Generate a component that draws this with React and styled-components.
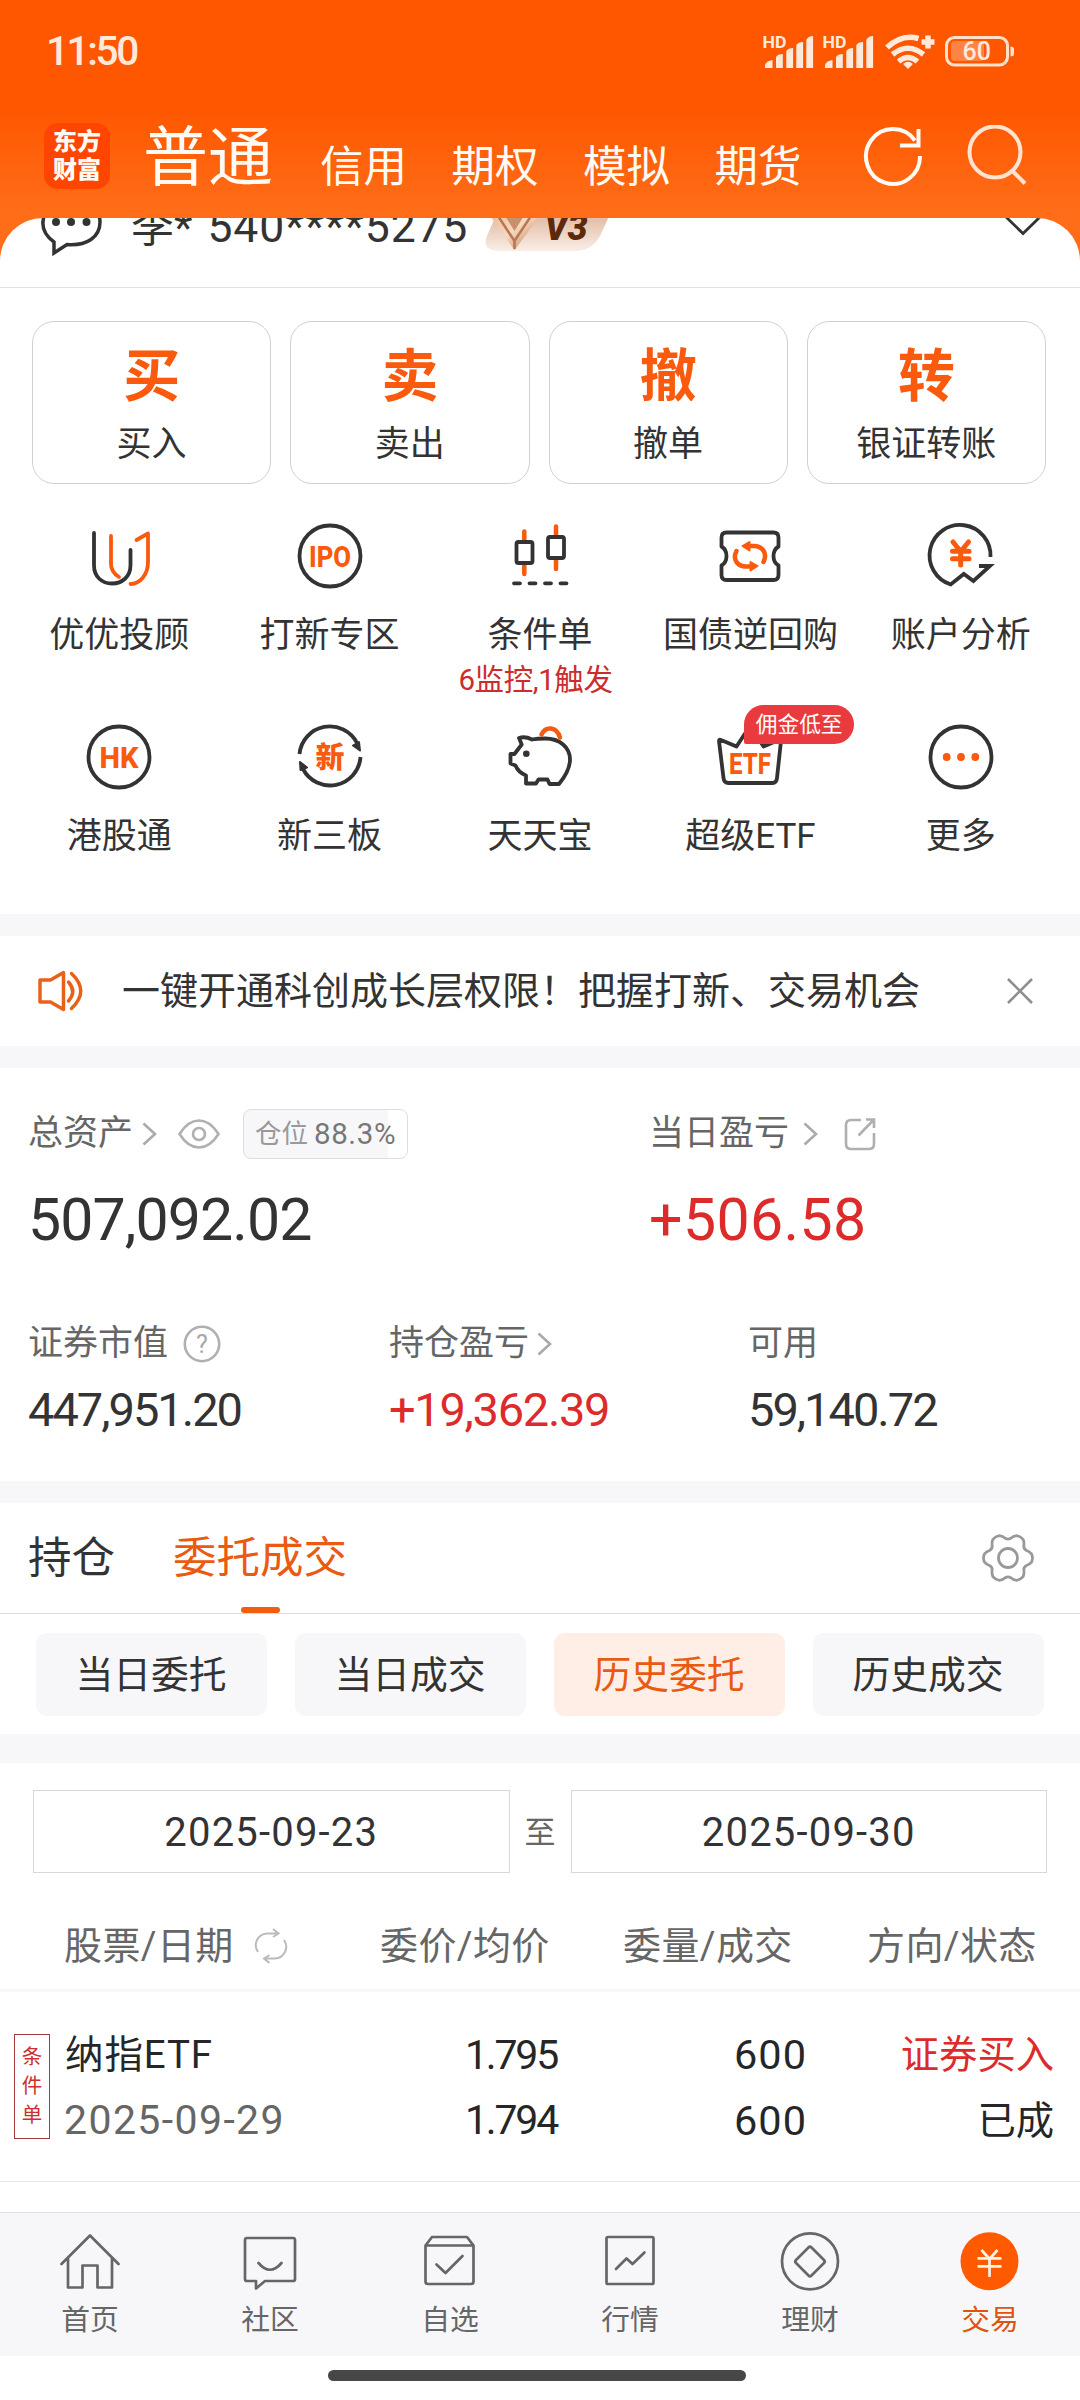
import React from "react";
import styled, { createGlobalStyle } from "styled-components";

const orange = "#f95a0d";
const dark = "#333";

const GlobalStyle = createGlobalStyle`
* {
	box-sizing: border-box;
}
body {
	margin: 0;
	background: #fff;
	font-family: Roboto, "Noto Sans CJK SC", sans-serif;
	color: #333;
}
svg {
	display: block;
	flex: none;
}
`;

const Page = styled.div`
width: 1080px;
height: 2400px;
overflow: hidden;
display: flex;
flex-direction: column;
background: linear-gradient(#ff5600 0, #ff5600 105px, #ff6d18 212px);
`;

const Text = styled.span`
font-size: ${p => p.$size}px;
line-height: ${p => p.$lh || Math.round(p.$size * 1.2)}px;
color: ${p => p.$color || "inherit"};
font-weight: ${p => p.$weight || 400};
letter-spacing: ${p => p.$ls || 0}px;
margin-left: ${p => p.$ml || 0}px;
margin-right: ${p => p.$mr || 0}px;
white-space: nowrap;
`;

/* ---------- header ---------- */

const StatusBar = styled.div`
height: 102px;
display: flex;
justify-content: space-between;
padding: 0 65px 0 46px;
align-items: center;
color: #ffe9da;
`;

const StatusIcons = styled.div`
display: flex;
align-items: center;
`;

const TopNav = styled.div`
height: 116px;
display: flex;
align-items: flex-start;
padding: 0 51px 0 44px;
color: #fffaf3;
`;

const Logo = styled.div`
width: 66px;
height: 66px;
margin-top: 21px;
padding-top: 5px;
border-radius: 14px;
background: #ff4500;
text-align: center;
font-size: 24px;
line-height: 28px;
font-weight: 900;
`;

const TopTabs = styled.div`
display: flex;
align-items: flex-start;
margin: 16px 0 0 33px;
flex: 1;
`;

const TopTab = styled.span`
font-size: ${p => (p.$active ? 65 : 43.5)}px;
line-height: 80px;
padding-top: ${p => (p.$active ? 0 : 10)}px;
margin-right: ${p => (p.$active ? 47 : 44.5)}px;
`;

const TopIcons = styled.div`
display: flex;
gap: 44px;
margin-top: 23px;
`;

/* ---------- account ---------- */

const Sheet = styled.div`
flex: none;
height: 696px;
background: #fff;
border-radius: 43px 43px 0 0;
overflow: hidden;
`;

const AccountRow = styled.div`
height: 70px;
border-bottom: 1px solid #e2e2e2;
overflow: hidden;
`;

const AccountInner = styled.div`
display: flex;
align-items: center;
height: 60px;
margin-top: -21px;
padding: 0 38px;
`;

const Spacer = styled.div`
flex: ${p => (p.$w ? "none" : 1)};
width: ${p => p.$w || 0}px;
`;

const Actions = styled.div`
display: grid;
grid-template-columns: repeat(4, 1fr);
gap: 19px;
padding: 33px 34px 0 32px;
`;

const Action = styled.div`
height: 163px;
border: 1.5px solid #d0d0d0;
border-radius: 22px;
display: flex;
flex-direction: column;
align-items: center;
padding-top: 20px;
`;

const IconGrid = styled.div`
display: grid;
grid-template-columns: repeat(5, 1fr);
grid-auto-rows: 201px;
padding: 36px 14px 0;
`;

const IconCell = styled.div`
position: relative;
display: flex;
flex-direction: column;
align-items: center;
`;

const CellLabel = styled.span`
margin-top: 23px;
font-size: 35px;
line-height: 41px;
white-space: nowrap;
`;

const CellNote = styled.span`
margin: 6px 9px 0 0;
font-size: 29.5px;
line-height: 36px;
letter-spacing: -0.4px;
color: #cc2c2c;
white-space: nowrap;
`;

const Badge = styled.span`
position: absolute;
left: 99px;
top: -16px;
width: 110px;
height: 39px;
border-radius: 20px 20px 20px 2px;
background: #e93b3d;
color: #fff;
font-size: 21.7px;
line-height: 40px;
text-align: center;
`;

const Band = styled.div`
flex: none;
height: ${p => p.$h}px;
background: #f7f7fa;
`;

const Notice = styled.div`
flex: none;
height: 110px;
background: #fff;
display: flex;
align-items: center;
justify-content: space-between;
padding: 0 47px 0 37px;
`;

/* ---------- assets ---------- */

const Assets = styled.div`
flex: none;
height: 413px;
background: #fff;
padding: 41px 0 0 28px;
`;

const AssetRow = styled.div`
display: grid;
grid-template-columns: ${p => p.$cols};
margin-top: ${p => p.$mt || 0}px;
`;

const AssetLabel = styled.div`
display: flex;
align-items: center;
height: 50px;
color: #666;
font-size: 35px;
line-height: 42px;
white-space: nowrap;
`;

const AssetValue = styled.div`
font-size: ${p => p.$size}px;
line-height: 60px;
letter-spacing: ${p => p.$ls}px;
margin-top: ${p => p.$mt}px;
color: ${p => (p.$up ? "#dd2b2b" : dark)};
white-space: nowrap;
`;

const Chip = styled.div`
display: flex;
align-items: center;
width: 165px;
height: 50px;
margin-left: 23px;
padding-left: 11px;
border: 1px solid #dedee0;
border-radius: 8px;
background: linear-gradient(to right, #f7f7fa 88.3%, #fff 88.3%);
`;

/* ---------- orders ---------- */

const Tabs = styled.div`
flex: none;
height: 111px;
background: #fff;
border-bottom: 1px solid #dcdcdc;
display: flex;
align-items: center;
padding: 0 46px 0 28px;
`;

const Tab = styled.div`
position: relative;
height: 110px;
margin-right: 58px;
font-size: 43.5px;
line-height: 112px;
color: ${p => (p.$active ? "#ea5a10" : dark)};
&::after {
	content: "";
	display: ${p => (p.$active ? "block" : "none")};
	position: absolute;
	left: 50%;
	bottom: 0;
	width: 39px;
	height: 6px;
	margin-left: -19px;
	border-radius: 3px;
	background: #f45c10;
}
`;

const Filters = styled.div`
flex: none;
height: 120px;
background: #fff;
display: grid;
grid-template-columns: repeat(4, 1fr);
gap: 28px;
padding: 19px 36px 0;
`;

const Filter = styled.div`
height: 83px;
padding-right: 1px;
border-radius: 11px;
background: ${p => (p.$active ? "#ffeee6" : "#f7f7fa")};
color: ${p => (p.$active ? "#ea5a10" : dark)};
font-size: 37.8px;
line-height: 85px;
text-align: center;
`;

const DateRow = styled.div`
flex: none;
height: 110px;
background: #fff;
display: flex;
padding: 27px 33px 0;
`;

const DateBox = styled.div`
flex: 1;
height: 83px;
border: 1.5px solid #d8d8d8;
font-size: 40px;
letter-spacing: 1.2px;
line-height: 84px;
text-align: center;
`;

const DateSep = styled.div`
width: 61px;
font-size: 31px;
line-height: 85px;
text-align: center;
color: #666;
`;

const HeadRow = styled.div`
flex: none;
height: 119px;
background: #fff;
border-bottom: 3px solid #f5f7f8;
display: grid;
grid-template-columns: 316px 243px 244px 1fr;
padding: 52px 0 0 64px;
font-size: 38px;
letter-spacing: 0.4px;
line-height: 42px;
color: #666;
white-space: nowrap;
`;

const HeadCell = styled.div`
display: flex;
align-items: center;
gap: 19px;
height: 42px;
`;

const OrderRow = styled.div`
flex: none;
height: 190px;
background: #fff;
border-bottom: 1px solid #e8e8e8;
display: grid;
grid-template-columns: 50px 258px 235px 250px 247px;
padding: 30px 0 0 14px;
`;

const Tag = styled.div`
width: 36px;
height: 105px;
margin-top: 12px;
padding-top: 8px;
border: 1.5px solid #a33c3c;
color: #cc2f2f;
font-size: 20.5px;
line-height: 29px;
text-align: center;
`;

const OrderCell = styled.div`
display: flex;
flex-direction: column;
align-items: ${p => (p.$left ? "flex-start" : "flex-end")};
color: #262626;
`;

const Filler = styled.div`
flex: 1;
background: #fff;
`;

/* ---------- bottom bar ---------- */

const BottomNav = styled.div`
flex: none;
height: 144px;
border-top: 1px solid #e0e0e0;
background: #f7f7fa;
display: grid;
grid-template-columns: repeat(6, 1fr);
`;

const NavItem = styled.div`
display: flex;
flex-direction: column;
align-items: center;
padding-top: 16px;
color: ${p => (p.$active ? "#dc560f" : "#666")};
font-size: 28.8px;
line-height: 32px;
span {
	margin-top: 11px;
}
`;

const HomeArea = styled.div`
flex: none;
height: 44px;
background: #fff;
display: flex;
justify-content: center;
padding-top: 14px;
`;

const HomeBar = styled.div`
width: 418px;
height: 11px;
margin-right: 6px;
border-radius: 6px;
background: #474747;
`;

/* ---------- icons ---------- */

const Signal = () => (
    <svg width="60" height="40" viewBox="0 0 60 40" fill="#ffe9da">
        <text x="-0.5" y="16.5" fontSize="16.500" fontWeight="700" textLength="24" lengthAdjust="spacingAndGlyphs">HD</text>
        <path d="M2 37v-3q1-4 7.500-5v8zM13 37V26q2-3 6.800-3v14zM23.300 37V20q2-3 6.800-3v20zM33.300 37V14q2-3 6.800-3v26zM43.300 37V9q2-4 6.800-4v32z" />
    </svg>
);

const Wifi = () => (
    <svg width="62" height="40" viewBox="0 0 62 40" fill="none" stroke="#ffe9da" strokeWidth="5.500">
        <path d="M4 16.500Q19 2.500 35.500 7.500M9.500 23.500q15.500-12.500 31 0M15.500 30.500q9.500-8 19 0" />
        <path d="M25 38l-5-5q5-4.500 10 0z" fill="#ffe9da" stroke="none" />
        <path d="M38.500 11h13M45 4.500v13" />
    </svg>
);

const Battery = () => (
    <svg width="70" height="32" viewBox="0 0 70 32">
        <rect x="6" y="6" width="33" height="20" rx="4" fill="#ff8345" />
        <rect x="1.500" y="2.500" width="61" height="27.500" rx="8" fill="none" stroke="#ffe0cb" strokeWidth="3" />
        <path d="M65.500 11.500q3.500 0 3.500 2.500v5q0 2.500-3.500 2.500z" fill="#ffe0cb" />
        <text x="17.500" y="25" fontSize="25" fontWeight="500" fill="#ffe9da">60</text>
    </svg>
);

const Refresh = () => (
    <svg width="60" height="64" viewBox="0 0 60 64" fill="none" stroke="#fffaf3" strokeWidth="4">
        <path d="M57 31A27 27.500 0 1 1 52 15.500" />
        <path d="M55.500 4v16.500H37" />
    </svg>
);

const Search = () => (
    <svg width="62" height="64" viewBox="0 0 62 64" fill="none" stroke="#ffe3d0" strokeWidth="4">
        <circle cx="28" cy="27" r="25.500" />
        <path d="M44.500 45l13.500 13.500" />
    </svg>
);

const Chat = () => (
    <svg width="66" height="64" viewBox="0 0 66 64" fill="none" stroke="#333" strokeWidth="3.500">
        <path d="M16 58V47Q4 38 5 27C6 12 18 4 33 4s29 9 29 23c0 15-13 24-33 22.500z" />
        <g fill="#333" stroke="none">
            <circle cx="18" cy="27" r="4" />
            <circle cx="33" cy="27" r="4" />
            <circle cx="48.500" cy="27" r="4" />
        </g>
    </svg>
);

const LevelBadge = () => (
    <svg width="130" height="48" viewBox="0 0 130 48">
        <defs>
            <linearGradient id="lv" x1="0" y1="0" x2="0" y2="1">
                <stop offset="0.2" stopColor="#dfb59d" />
                <stop offset="1" stopColor="#faeee7" />
            </linearGradient>
            <linearGradient id="gem" x1="0" y1="0" x2="1" y2="1">
                <stop offset="0" stopColor="#e8b28a" />
                <stop offset="0.5" stopColor="#f7d9c0" />
                <stop offset="1" stopColor="#b87550" />
            </linearGradient>
        </defs>
        <path d="M30 0h100L116 31q-8 17-26 17H12Q-3 47 1.500 34L12 10Q18 0 30 0z" fill="url(#lv)" />
        <path d="M9 4h42l4 9-25.500 34L5 13z" fill="url(#gem)" />
        <path d="M13 13l16.500 25L46 13M29.500 38v8" fill="none" stroke="#b9774f" strokeWidth="2.500" />
        <path d="M19 11l10.500 17L40 11z" fill="#c98f6b" />
        <text x="59.500" y="37" fontSize="37" fontWeight="900" fontStyle="italic" fill="#5c2a0a" textLength="43" lengthAdjust="spacingAndGlyphs">V3</text>
    </svg>
);

const ChevronDown = () => (
    <svg width="38" height="40" viewBox="0 0 38 40" fill="none" stroke="#333" strokeWidth="2.800">
        <path d="M1 9l18 17.500L37 9" />
    </svg>
);

const Glyph = ({ children }) => (
    <svg width="72" height="72" viewBox="0 0 72 72" fill="none" stroke={dark} strokeWidth="3.800" strokeLinecap="round" strokeLinejoin="round">
        {children}
    </svg>
);

const GlyphText = ({ children, width, y = 46.500 }) => (
    <text x={36 - width / 2} y={y} fontSize="29" fontWeight="800" fill={orange} stroke="none" textLength={width} lengthAdjust="spacingAndGlyphs">
        {children}
    </text>
);

const glyphs = {
    advisor: (
        <Glyph>
            <path d="M11 13v32C11 57 19 63.500 29 63.500S47.500 57 47.500 45V30" />
            <path d="M28 16v28q0 8 8 13M53.500 20L65 13.500V42c0 13-8 21.500-17.500 22" stroke={orange} />
        </Glyph>
    ),
    ipo: (
        <Glyph>
            <circle cx="36" cy="36" r="30.500" />
            <GlyphText width={42}>IPO</GlyphText>
        </Glyph>
    ),
    candles: (
        <Glyph>
            <path d="M20.300 11.500v9M20.300 45v9M52 6.500v9M52 40v9" stroke={orange} strokeWidth="4.500" />
            <rect x="12.500" y="22" width="16" height="21" rx="2" />
            <rect x="44" y="17" width="16" height="21" rx="2" />
            <path d="M10 63.300h6M25.500 63.300h6M41 63.300h6M56.500 63.300h6" />
        </Glyph>
    ),
    bond: (
        <Glyph>
            <path d="M12.500 12.500h47q5 0 5 5v9q-5 3-5 9.500t5 9.500v9.500q0 5-5 5h-47q-5 0-5-5v-9.500q5-3 5-9.500t-5-9.500v-9q0-5 5-5z" />
            <g stroke={orange} strokeWidth="4.500">
                <path d="M49.500 42C54 33 48 26 40 26H35M22.500 31C18 40 24 46.500 32 46.500H37" />
                <path d="M35.500 22v8.500L28.500 26zM36.500 42v8.500L43.500 46z" fill={orange} strokeWidth="2" />
            </g>
        </Glyph>
    ),
    analysis: (
        <Glyph>
            <path d="M65.500 37A30.500 30.500 0 1 0 25.700 64.500L38.800 54l9.600 7L65 46H54" strokeLinecap="butt" strokeLinejoin="miter" />
            <path d="M28 22l7.700 9.500L43.500 22M27.500 31.300H44M27.500 38.700H44M35.700 31.500V45" stroke={orange} strokeWidth="5" />
        </Glyph>
    ),
    hk: (
        <Glyph>
            <circle cx="36" cy="36" r="30.500" />
            <GlyphText width={39}>HK</GlyphText>
        </Glyph>
    ),
    board: (
        <Glyph>
            <path d="M5.500 33A30.500 30.500 0 0 1 63 22M66.500 36A30.500 30.500 0 0 1 9 48" strokeLinecap="butt" />
            <path d="M59 24.500l6-3.500 1 8.500zM13 46.500l-6.500 2.500-.500-8z" fill={dark} strokeWidth="2" />
            <text x="21.500" y="46.500" fontSize="29" fontWeight="900" fill={orange} stroke="none">新</text>
        </Glyph>
    ),
    piggy: (
        <Glyph>
            <path d="M15 17q6-2 13 1.500 5-1 13-1c15 0 25 9 25 21 0 9-4 16-11 24.500h-9.500L43.500 58.500h-9L32 62.500H22V54.500Q14 51 11.500 44.500L6.500 42.500V33H10.500L17.700 23.500z" />
            <circle cx="22.300" cy="32.700" r="3.300" fill={dark} stroke="none" />
            <path d="M37.500 13.500c4-8.500 15-8.500 18.500 3" stroke={orange} strokeWidth="4.500" />
        </Glyph>
    ),
    etf: (
        <Glyph>
            <path d="M5 20q0-2 2-1l15.500 6.500L34 8q2-2 4 0l11.500 17.500L65 19q2-1 2 1l-4 37q-.500 5-4.500 5H14.500q-4.500 0-5-5z" />
            <GlyphText width={42} y={52.500}>ETF</GlyphText>
        </Glyph>
    ),
    more: (
        <Glyph>
            <circle cx="36" cy="36" r="30.500" />
            <g fill={orange} stroke="none">
                <circle cx="21.700" cy="36" r="3.900" />
                <circle cx="36" cy="36" r="3.900" />
                <circle cx="50.300" cy="36" r="3.900" />
            </g>
        </Glyph>
    ),
};

const Speaker = () => (
    <svg width="48" height="42" viewBox="0 0 48 42" fill="none" stroke="#e8611a" strokeWidth="3.500" strokeLinejoin="round" strokeLinecap="round">
        <path d="M3 10h10.500L26.500 2.500v37L13.500 32H3z" />
        <path d="M31.500 12q8.500 9.500 0 19M34.500 3.500q18.500 17.500 0 35" />
    </svg>
);

const Close = () => (
    <svg width="26" height="26" viewBox="0 0 26 26" fill="none" stroke="#8e8e8e" strokeWidth="2.600">
        <path d="M1 1l24 24M25 1L1 25" />
    </svg>
);

const Caret = () => (
    <svg width="15" height="24" viewBox="0 0 15 24" fill="none" stroke="#aaa" strokeWidth="2.600">
        <path d="M1.500 1.500L13 12 1.500 22.500" />
    </svg>
);

const Eye = () => (
    <svg width="42" height="30" viewBox="0 0 42 30" fill="none" stroke="#b0b0b0" strokeWidth="2.600">
        <path d="M1.500 15Q10 1.500 21 1.500T40.500 15Q32 28.500 21 28.500T1.500 15z" />
        <circle cx="21" cy="15" r="6" />
    </svg>
);

const Share = () => (
    <svg width="32" height="34" viewBox="0 0 32 34" fill="none" stroke="#b0b0b0" strokeWidth="2.600">
        <path d="M17 3H7Q2 3 2 8v19q0 5 5 5h18q5 0 5-5V16M22 2.500h8V11M29.500 3L14.500 18.500" />
    </svg>
);

const Question = () => (
    <svg width="38" height="38" viewBox="0 0 38 38">
        <circle cx="19" cy="19" r="17.200" fill="none" stroke="#b0b0b0" strokeWidth="2.600" />
        <text x="19" y="28" fontSize="25" textAnchor="middle" fill="#a8a8a8">?</text>
    </svg>
);

// six rounded teeth around the centre
const gearPath = () => {
    const at = (r, deg) => {
        const a = (deg * Math.PI) / 180;
        return `${(26 + r * Math.cos(a)).toFixed(1)} ${(26 + r * Math.sin(a)).toFixed(1)}`;
    };
    let d = `M${at(24, -9)}`;
    for (let k = 0; k < 360; k += 60) {
        d += `Q${at(25.2, k)} ${at(24, k + 9)}Q${at(22.5, k + 17)} ${at(20, k + 22)}Q${at(18, k + 30)} ${at(20, k + 38)}Q${at(22.5, k + 43)} ${at(24, k + 51)}`;
    }
    return d + "z";
};

const Gear = () => (
    <svg width="52" height="52" viewBox="0 0 52 52" fill="none" stroke="#999" strokeWidth="2.800" strokeLinejoin="round">
        <path d={gearPath()} />
        <circle cx="26" cy="26" r="9.500" />
    </svg>
);

const Swap = () => (
    <svg width="36" height="36" viewBox="0 0 36 36" fill="none" stroke="#bbb" strokeWidth="2">
        <path d="M5 24Q1 18 4 12t10-6.500H25M20 1l5.500 4.500L20 9M31 12q4 6 1 12t-10 6.500H11M16.500 35L11 30.500 16.500 27" />
    </svg>
);

const NavGlyph = ({ children }) => (
    <svg width="64" height="64" viewBox="0 0 64 64" fill="none" stroke="#666" strokeWidth="2.700" strokeLinecap="round" strokeLinejoin="round">
        {children}
    </svg>
);

const navItems = [
    { label: "首页", icon: <path d="M3.500 35L32 6.500 60.500 35M10 29v29.500h14.500V36.500H39.500v22H54V29" /> },
    { label: "社区", icon: <path d="M9 9h46q2 0 2 2v39q0 2-2 2H27l-9 7.500V52H9q-2 0-2-2V11q0-2 2-2zM20.500 34q11.500 13.500 23 0" /> },
    { label: "自选", icon: <path d="M7.500 16.500h48v36q0 2.500-2.500 2.500H10q-2.500 0-2.500-2.500zl6.500-8.500h35l6.500 8.500M18.500 35.500l9 8.500L44.500 27" /> },
    { label: "行情", icon: <path d="M10 8h44q1.500 0 1.500 1.500v44q0 1.500-1.500 1.500H10q-1.500 0-1.500-1.500v-44Q8.500 8 10 8zM18 40l10.500-10.500 6 5.500L46.500 23.500" /> },
    {
        label: "理财",
        icon: (
            <>
                <circle cx="32" cy="32.300" r="28" />
                <path d="M30.500 18.500q1.500-1.500 3 0l12.500 12.500q1.500 1.500 0 3L33.500 46.500q-1.500 1.500-3 0L18 34q-1.500-1.500 0-3z" />
            </>
        ),
    },
    {
        label: "交易",
        active: true,
        icon: (
            <>
                <circle cx="31.500" cy="32.300" r="29" fill="#ff5a00" stroke="none" />
                <path d="M23.500 21l8 9 8-9M19.500 29.300h24M19.500 37.300h24M31.500 30v18" stroke="#fff0e6" strokeLinecap="butt" />
            </>
        ),
    },
];

const actions = [
    ["买", "买入"],
    ["卖", "卖出"],
    ["撤", "撤单"],
    ["转", "银证转账"],
];

const cells = [
    { icon: "advisor", label: "优优投顾" },
    { icon: "ipo", label: "打新专区" },
    { icon: "candles", label: "条件单", note: "6监控,1触发" },
    { icon: "bond", label: "国债逆回购" },
    { icon: "analysis", label: "账户分析" },
    { icon: "hk", label: "港股通" },
    { icon: "board", label: "新三板" },
    { icon: "piggy", label: "天天宝" },
    { icon: "etf", label: "超级ETF", badge: "佣金低至" },
    { icon: "more", label: "更多" },
];

const Header = () => (
    <>
        <StatusBar>
            <Text $size={40.500} $weight={500} $ls={-2.4}>11:50</Text>
            <StatusIcons>
                <Signal />
                <Signal />
                <Wifi />
                <Battery />
            </StatusIcons>
        </StatusBar>
        <TopNav>
            <Logo>东方<br />财富</Logo>
            <TopTabs>
                <TopTab $active>普通</TopTab>
                <TopTab>信用</TopTab>
                <TopTab>期权</TopTab>
                <TopTab>模拟</TopTab>
                <TopTab>期货</TopTab>
            </TopTabs>
            <TopIcons>
                <Refresh />
                <Search />
            </TopIcons>
        </TopNav>
    </>
);

const Account = () => (
    <AccountRow>
        <AccountInner>
            <Chat />
            <Text $size={43} $ml={27}>李*</Text>
            <Text $size={44.500} $ls={0.8} $ml={15} $mr={17}>540****5275</Text>
            <LevelBadge />
            <Spacer />
            <ChevronDown />
        </AccountInner>
    </AccountRow>
);

const Orders = () => (
    <>
        <DateRow>
            <DateBox>2025-09-23</DateBox>
            <DateSep>至</DateSep>
            <DateBox>2025-09-30</DateBox>
        </DateRow>
        <HeadRow>
            <HeadCell>股票/日期 <Swap /></HeadCell>
            <HeadCell>委价/均价</HeadCell>
            <HeadCell>委量/成交</HeadCell>
            <HeadCell>方向/状态</HeadCell>
        </HeadRow>
        <OrderRow>
            <Tag>条<br />件<br />单</Tag>
            <OrderCell $left>
                <Text $size={38.5} $lh={66} $ls={0.9} $ml={1}>纳指ETF</Text>
                <Text $size={41} $lh={65} $ls={1.4} $color="#666">2025-09-29</Text>
            </OrderCell>
            <OrderCell>
                <Text $size={41} $lh={66} $ls={-2.2}>1.795</Text>
                <Text $size={41} $lh={65} $ls={-2.2}>1.794</Text>
            </OrderCell>
            <OrderCell>
                <Text $size={41.5} $lh={66} $ls={1}>600</Text>
                <Text $size={41.5} $lh={65} $ls={1}>600</Text>
            </OrderCell>
            <OrderCell>
                <Text $size={38.3} $lh={66} $color="#dd2b2b">证券买入</Text>
                <Text $size={38.3} $lh={65}>已成</Text>
            </OrderCell>
        </OrderRow>
    </>
);

const App = () => {
    return (
        <Page>
            <GlobalStyle />
            <Header />
            <Sheet>
                <Account />
                <Actions>
                    {actions.map(([mark, label]) => (
                        <Action key={label}>
                            <Text $size={57} $lh={70} $weight={700} $color={orange}>{mark}</Text>
                            <Text $size={35} $lh={65}>{label}</Text>
                        </Action>
                    ))}
                </Actions>
                <IconGrid>
                    {cells.map(c => (
                        <IconCell key={c.label}>
                            {glyphs[c.icon]}
                            {c.badge && <Badge>{c.badge}</Badge>}
                            <CellLabel>{c.label}</CellLabel>
                            {c.note && <CellNote>{c.note}</CellNote>}
                        </IconCell>
                    ))}
                </IconGrid>
            </Sheet>
            <Band $h={22} />
            <Notice>
                <Speaker />
                <Text $size={38} $ml={37}>一键开通科创成长层权限！把握打新、交易机会</Text>
                <Spacer />
                <Close />
            </Notice>
            <Band $h={22} />
            <Assets>
                <AssetRow $cols="621px 1fr">
                    <div>
                        <AssetLabel>
                            总资产
                            <Spacer $w={9} />
                            <Caret />
                            <Spacer $w={21} />
                            <Eye />
                            <Chip>
                                <Text $size={26.5} $color="#999">仓位</Text>
                                <Text $size={29.5} $color="#777" $ls={0.6} $ml={6}>88.3%</Text>
                            </Chip>
                        </AssetLabel>
                        <AssetValue $size={59} $ls={-0.9} $mt={31}>507,092.02</AssetValue>
                    </div>
                    <div>
                        <AssetLabel>
                            当日盈亏
                            <Spacer $w={14} />
                            <Caret />
                            <Spacer $w={26} />
                            <Share />
                        </AssetLabel>
                        <AssetValue $size={59} $ls={0.4} $mt={31} $up>+506.58</AssetValue>
                    </div>
                </AssetRow>
                <AssetRow $cols="361px 359px 1fr" $mt={69}>
                    <div>
                        <AssetLabel>
                            证券市值
                            <Spacer $w={15} />
                            <Question />
                        </AssetLabel>
                        <AssetValue $size={47} $ls={-2} $mt={11}>447,951.20</AssetValue>
                    </div>
                    <div>
                        <AssetLabel>
                            持仓盈亏
                            <Spacer $w={8} />
                            <Caret />
                        </AssetLabel>
                        <AssetValue $size={47} $ls={-1.3} $mt={11} $up>+19,362.39</AssetValue>
                    </div>
                    <div>
                        <AssetLabel>可用</AssetLabel>
                        <AssetValue $size={47} $ls={-2} $mt={11}>59,140.72</AssetValue>
                    </div>
                </AssetRow>
            </Assets>
            <Band $h={22} />
            <Tabs>
                <Tab>持仓</Tab>
                <Tab $active>委托成交</Tab>
                <Spacer />
                <Gear />
            </Tabs>
            <Filters>
                <Filter>当日委托</Filter>
                <Filter>当日成交</Filter>
                <Filter $active>历史委托</Filter>
                <Filter>历史成交</Filter>
            </Filters>
            <Band $h={29} />
            <Orders />
            <Filler />
            <BottomNav>
                {navItems.map(n => (
                    <NavItem key={n.label} $active={n.active}>
                        <NavGlyph>{n.icon}</NavGlyph>
                        <span>{n.label}</span>
                    </NavItem>
                ))}
            </BottomNav>
            <HomeArea>
                <HomeBar />
            </HomeArea>
        </Page>
    );
};

export default App;
